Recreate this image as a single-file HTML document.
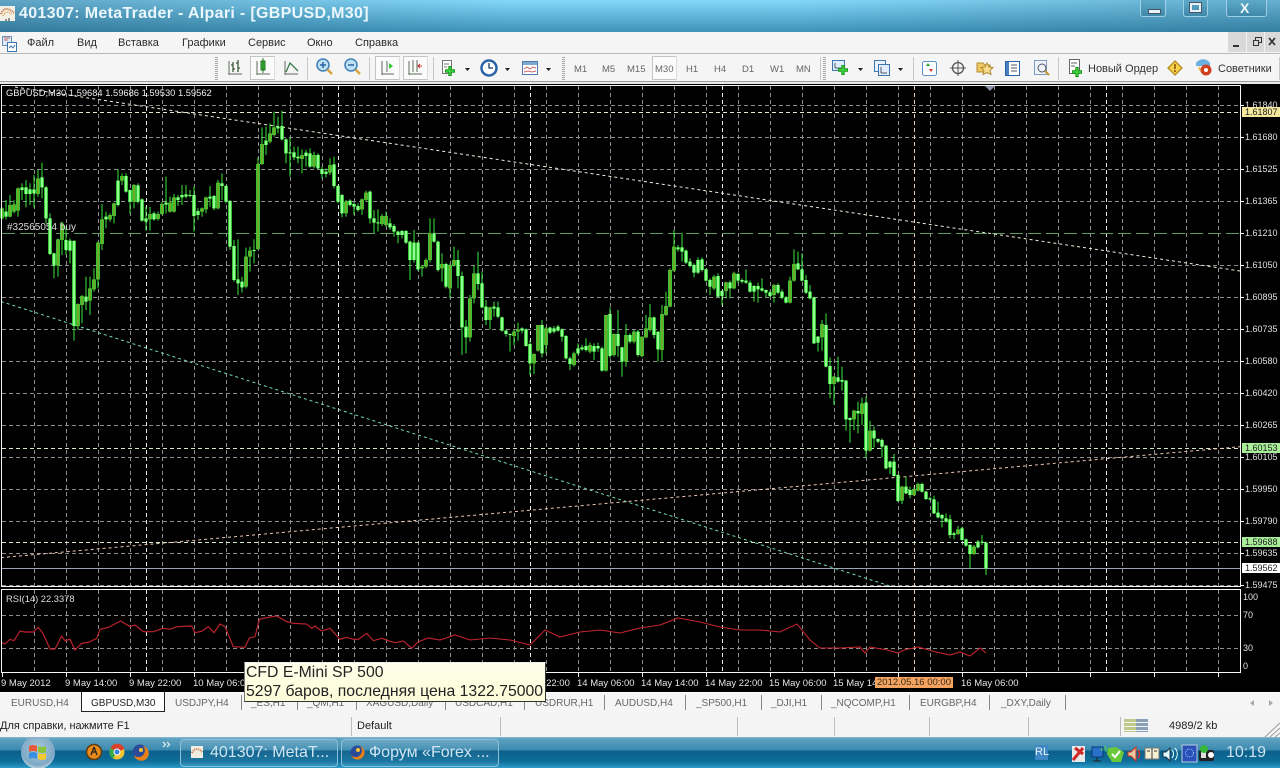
<!DOCTYPE html>
<html><head><meta charset="utf-8"><title>MetaTrader</title>
<style>
html,body{margin:0;padding:0;background:#000}
body{position:relative;width:1280px;height:768px;overflow:hidden;font-family:"Liberation Sans",sans-serif}
.t{position:absolute;white-space:nowrap;line-height:1}
.b{position:absolute}
.m{font-size:11px;color:#2a2a2a;top:38px}
.w{font-size:9.5px;color:#e4e4e4;top:679px}
.p{font-size:9px;color:#e0e0e0;left:1245px;margin-top:1px}
.h{position:absolute;left:1242px;width:38px;height:10px;font-size:9px;line-height:10px;color:#222;padding-left:3px;box-sizing:border-box}
.f{font-size:9.5px;color:#666;top:65px}
.n{font-size:10px;color:#666;top:699px}
.s{position:absolute;width:1px;top:695px;height:15px;background:#888}
.q{position:absolute;width:1px;top:717px;height:19px;background:#bdbdbd}
.r{position:absolute;width:1px;top:57px;height:23px;background:#c8c8c8}
.g{position:absolute;width:3px;top:57px;height:23px;background:repeating-linear-gradient(#aaa 0 1px,#f4f4f4 1px 2px)}
.pr{position:absolute;border:1px solid #c4c4c4;border-right-color:#ddd;background:#fbfbfb;box-sizing:border-box;top:56px;height:24px}
</style></head><body>

<svg class="b" style="left:0;top:0" width="1280" height="768" viewBox="0 0 1280 768">
<defs>
<path id="a1" d="M6 325V355M30 315V350M42 313V335M54 265V332M114 235V282M174 418V497M186 370V420M234 612V678M246 588V615M270 565V602M282 538V568M294 428V538M306 358V432M330 345V358M342 310V348M366 228V242M402 255V305M450 342V358M474 342V357M486 312V342M510 308V335M522 292V335M606 325V335M618 292V328M654 248V325M738 470V560M750 452V470M774 192V447M786 132V192M810 100V125M822 82V105M906 165V177M942 165V200M990 195V218"/>
<path id="a2" d="M18 335V350M66 262V270M78 262V282M90 268V282M102 268V280M126 232V262M138 262V355M150 355V462M162 460V497M198 420V450M210 422V452M222 423V678M258 590V605M318 350V358M354 242V315M378 228V275M390 270V305M414 256V305M426 298V362M438 355V365M462 340V358M498 308V314M534 292V300M546 285V292M558 283V290M570 285V288M582 285V348M594 333V345M630 290V296M642 288V325M666 250V258M678 258V305M690 303V440M702 438V540M714 538V550M726 545V562M762 450V453M798 122V135M834 80V85M846 78V118M858 118V160M870 157V160M882 157V172M894 170V175M918 158V168M930 160V200M954 165V205M966 207V222M978 215V222M1002 193V258M1014 258V305"/>
<path id="b1" d="M18 305V340M66 298V328M78 278V300M126 348V372M138 348V375M246 500V505M258 480V500M270 400V480M306 492V505M330 495V565M342 480V497M390 595V712M402 520V595M450 622V660M522 695V708M534 688V695M582 762V790M594 675V752M618 685V735M702 760V795M750 735V755M798 645V812M822 702V765M858 705V785M882 695V725M906 710V768M918 685V712M930 652V690"/>
<path id="b2" d="M6 285V340M30 302V315M42 312V320M54 318V330M90 275V355M102 355V368M114 367V370M150 370V382M162 378V395M174 395V405M186 393V405M198 393V428M210 425V480M222 428V480M234 428V508M282 400V425M294 425V510M318 492V560M354 480V528M366 528V682M378 680V712M414 520V552M426 550V622M438 620V660M462 620V626M474 622V650M486 652V692M498 692V702M510 702V705M546 685V692M558 688V738M570 732V790M606 675V760M630 683V698M642 685V695M654 680V692M666 688V710M678 708V775M690 775V792M714 745V760M726 742V748M738 738V750M762 738V755M774 738V745M786 745V812M810 642V768M834 702V738M846 742V785M870 705V725M894 695V765M942 652V705M954 695V748"/>
<path id="c1" d="M6 282V390M18 258V285M30 150V260M42 80V152M162 170V205M198 187V213M222 160V205M342 195V225M390 182V248M402 132V182M486 312V352M522 470V492M582 572V598M606 550V582M630 632V692"/>
<path id="c2" d="M54 82V88M66 82V95M78 92V128M90 125V138M102 135V158M114 120V158M126 118V150M138 148V182M150 180V200M174 168V230M186 213V228M210 187V205M234 162V182M246 180V185M258 182V188M270 188V215M282 198V215M294 198V208M306 205V212M318 210V218M330 217V228M354 195V218M366 215V233M378 232V248M414 130V148M426 148V182M438 180V218M450 215V235M462 232V370M474 350V368M498 315V440M510 438V492M534 472V485M546 480V485M558 482V598M570 594V600M594 573V580M618 548V692M642 632V655M654 657V665M666 660V680M678 677V745M690 725V742M702 725V768"/>
<path id="d1" d="M126 170V212M162 178V195M174 162V182M294 298V312M342 350V372"/>
<path id="d2" d="M114 135V213M138 170V190M150 180V195M186 162V185M198 185V207M210 205V208M222 208V250M234 248V262M246 255V265M258 265V275M270 268V315M282 310V315M306 295V330M318 328V347M330 345V372M354 335V352M366 335V338M378 338V415"/>
<radialGradient id="orb" cx=".5" cy=".35" r=".7"><stop offset="0" stop-color="#cfe4f0"/><stop offset=".7" stop-color="#6f9fc0"/><stop offset="1" stop-color="#e8f2f6"/></radialGradient>
</defs>
<rect x="0" y="84" width="1280" height="608" fill="#000"/>

<!-- grid -->
<g fill="none" stroke="#8e8e8e" stroke-width="1" stroke-dasharray="4 3" shape-rendering="crispEdges">
<path d="M2 105.500H1240M2 137.500H1240M2 169.500H1240M2 201.500H1240M2 265.500H1240M2 297.500H1240M2 329.500H1240M2 361.500H1240M2 393.500H1240M2 425.500H1240M2 457.500H1240M2 489.500H1240M2 521.500H1240M2 553.500H1240M2 585.500H1240"/>
<path d="M2 615.500H1240M2 648.500H1240"/>
<path d="M34.500 86V587M66.500 86V587M98.500 86V587M130.500 86V587M162.500 86V587M194.500 86V587M226.500 86V587M258.500 86V587M290.500 86V587M322.500 86V587M354.500 86V587M386.500 86V587M418.500 86V587M450.500 86V587M482.500 86V587M514.500 86V587M546.500 86V587M578.500 86V587M610.500 86V587M642.500 86V587M674.500 86V587M706.500 86V587M738.500 86V587M770.500 86V587M802.500 86V587M834.500 86V587M866.500 86V587M898.500 86V587M930.500 86V587M962.500 86V587M994.500 86V587M1026.500 86V587M1058.500 86V587M1090.500 86V587M1122.500 86V587M1154.500 86V587M1186.500 86V587M1218.500 86V587"/>
<path d="M34.500 590V673M66.500 590V673M98.500 590V673M130.500 590V673M162.500 590V673M194.500 590V673M226.500 590V673M258.500 590V673M290.500 590V673M322.500 590V673M354.500 590V673M386.500 590V673M418.500 590V673M450.500 590V673M482.500 590V673M514.500 590V673M546.500 590V673M578.500 590V673M610.500 590V673M642.500 590V673M674.500 590V673M706.500 590V673M738.500 590V673M770.500 590V673M802.500 590V673M834.500 590V673M866.500 590V673M898.500 590V673M930.500 590V673M962.500 590V673M994.500 590V673M1026.500 590V673M1058.500 590V673M1090.500 590V673M1122.500 590V673M1154.500 590V673M1186.500 590V673M1218.500 590V673"/>
</g>
<g fill="none" stroke="#e6e6e6" stroke-width="1" stroke-dasharray="4 3" shape-rendering="crispEdges">
<path d="M146.500 86V587M338.500 86V587M530.500 86V587M722.500 86V587M1106.500 86V587M146.500 590V673M338.500 590V673M530.500 590V673M722.500 590V673M1106.500 590V673"/>
<path d="M2 112.500H1240" stroke="#e6e6d0"/>
<path d="M914.500 86V587M914.500 590V673" stroke="#f0ceb4"/>
<path d="M2 448.500H1240M2 542.500H1240" stroke="#d0e8c8"/>
</g>
<path d="M2 233.500H1240" stroke="#5f9c5f" stroke-dasharray="13 5" shape-rendering="crispEdges"/>
<path d="M2 568.500H1240" stroke="#9aa4b4" shape-rendering="crispEdges"/>

<!-- trend lines -->
<g fill="none" stroke-width="1" stroke-dasharray="3 3">
<path d="M15 87L1240 271" stroke="#f2efdc"/>
<path d="M1 301.500L890 586" stroke="#74dcb0"/>
<path d="M1 557.600L1240 446.700" stroke="#eec8b4"/>
</g>

<!-- candles A -->
<g transform="translate(0 100) scale(.33333)" fill="none" stroke-width="3" stroke="#3ce83c">
<path d="M6 322V358M18 300V358M30 285V352M42 300V340M54 262V350M66 250V300M78 240V322M90 250V315M102 225V322M114 210V290M126 188V295M138 258V370M150 340V465M162 458V535M174 415V530M186 365V465M198 380V465M210 415V490M222 420V722M234 610V690M246 585V670M258 530V630M270 530V645M282 505V575M294 425V565M306 312V450M318 335V385M330 340V365M342 308V370M354 208V320M366 220V255M378 220V278M390 268V340M402 252V325M414 250V310M426 295V365M438 320V392M450 320V392M462 335V362M474 335V362M486 305V345M498 230V340M510 290V338M522 282V338M534 285V318M546 255V315M558 255V295M570 270V292M582 260V395M594 325V360M606 322V350M618 290V340M630 258V320M642 285V330M654 240V328M666 220V300M678 255V310M690 300V450M702 420V545M714 418V585M726 530V578M738 443V565M750 440V515M762 418V490M774 172V450M786 82V195M798 80V165M810 70V130M822 35V110M834 50V100M846 32V122M858 115V190M870 112V230M882 140V180M894 140V190M906 148V220M918 150V200M930 145V203M942 155V205M954 160V208M966 200V235M978 205V232M990 175V225M1002 170V265M1014 255V310"/>
<use href="#a1" stroke-width="11" stroke="#3ce83c"/><use href="#a1" stroke-width="5" stroke="#7a9e28"/>
<use href="#a2" stroke-width="11" stroke="#3ce83c"/><use href="#a2" stroke-width="5" stroke="#a4ffa4"/>
</g>
<!-- candles B -->
<g transform="translate(340 100) scale(.33333)" fill="none" stroke-width="3" stroke="#3ce83c">
<path d="M6 282V352M18 300V350M30 298V320M42 305V345M54 310V335M66 295V345M78 272V305M90 272V370M102 330V400M114 328V395M126 342V378M138 335V380M150 355V390M162 372V410M174 392V430M186 390V415M198 390V432M210 422V540M222 390V488M234 425V512M246 495V530M258 475V505M270 355V488M282 355V428M294 422V515M306 460V545M318 488V565M330 490V595M342 440V500M354 450V565M366 515V765M378 660V760M390 585V725M402 498V610M414 455V570M426 515V625M438 600V675M450 620V688M462 605V650M474 605V655M486 650V695M498 690V710M510 700V755M522 690V735M534 668V722M546 682V700M558 685V740M570 720V825M582 760V822M594 675V755M606 660V772M618 680V760M630 680V702M642 678V700M654 675V695M666 685V725M678 705V778M690 770V810M702 755V800M714 730V765M726 735V752M738 715V755M750 728V760M762 730V780M774 728V755M786 740V815M798 645V815M810 622V775M822 700V770M834 630V770M846 740V830M858 672V800M870 700V730M882 690V730M894 690V770M906 710V772M918 645V715M930 612V695M942 650V715M954 695V785"/>
<use href="#b1" stroke-width="11" stroke="#3ce83c"/><use href="#b1" stroke-width="5" stroke="#7a9e28"/>
<use href="#b2" stroke-width="11" stroke="#3ce83c"/><use href="#b2" stroke-width="5" stroke="#a4ffa4"/>
</g>
<!-- candles C -->
<g transform="translate(660 220) scale(.33333)" fill="none" stroke-width="3" stroke="#3ce83c">
<path d="M6 255V422M18 215V288M30 145V262M42 30V155M54 75V95M66 38V125M78 88V132M90 115V142M102 130V172M114 112V162M126 112V155M138 145V185M150 175V225M162 165V210M174 160V232M186 210V255M198 185V235M210 182V235M222 155V208M234 158V190M246 175V190M258 148V192M270 182V218M282 195V245M294 188V248M306 175V215M318 208V232M330 212V232M342 192V248M354 190V222M366 208V238M378 228V250M390 170V250M402 88V185M414 95V150M426 100V185M438 165V222M450 195V238M462 230V372M474 348V395M486 300V392M498 280V442M510 412V535M522 468V555M534 410V488M546 440V512M558 480V632M570 592V668M582 570V630M594 545V640M606 533V615M618 530V715M630 602V695M642 620V682M654 655V670M666 655V712M678 675V748M690 722V762M702 702V770"/>
<use href="#c1" stroke-width="11" stroke="#3ce83c"/><use href="#c1" stroke-width="5" stroke="#7a9e28"/>
<use href="#c2" stroke-width="11" stroke="#3ce83c"/><use href="#c2" stroke-width="5" stroke="#a4ffa4"/>
</g>
<!-- candles D -->
<g transform="translate(860 430) scale(.33333)" fill="none" stroke-width="3" stroke="#3ce83c">
<path d="M114 132V216M126 168V222M138 140V192M150 170V205M162 172V198M174 158V185M186 158V188M198 182V210M210 200V212M222 197V252M234 215V265M246 252V292M258 250V278M270 255V325M282 305V328M294 288V315M306 290V332M318 325V350M330 342V415M342 345V375M354 330V355M366 315V345M378 335V435"/>
<use href="#d1" stroke-width="11" stroke="#3ce83c"/><use href="#d1" stroke-width="5" stroke="#7a9e28"/>
<use href="#d2" stroke-width="11" stroke="#3ce83c"/><use href="#d2" stroke-width="5" stroke="#a4ffa4"/>
</g>

<!-- RSI -->
<g transform="translate(0 570) scale(.33333)" fill="none" stroke="#c2242e" stroke-width="3.400">
<path d="M5 218L15 222L30 208L42 212L60 183L75 186L100 186L115 172L130 192L150 237L165 237L185 198L195 212L210 208L225 240L245 220L265 217L290 205L300 178L325 172L362 153L390 170L405 165L430 185L460 185L490 175L510 178L530 170L575 168L585 188L605 184L625 170L642 188L660 162L675 170L700 230L735 232L748 204L765 200L778 148L800 143L830 138L860 155L880 160L920 162L935 175L945 168L965 183L990 175L1020 208L1040 202L1060 208L1075 208L1100 190L1120 212L1145 205L1165 212L1185 218L1210 213L1235 235L1255 215"/>
</g>
<path d="M418 642L428 638L440 640L455 635L470 640L490 638L510 640L530 645L545 630L560 637L580 632L600 630L620 633L640 628L660 625L678 618L700 622L720 627L740 630L760 630L780 632L797 624L810 640L820 648L840 648L860 647L865 653L870 647L887 650L898 653L904 650L918 647L932 651L950 655L960 652L970 656L980 648L986 653" fill="none" stroke="#c2242e" stroke-width="1.100"/>

<!-- frames -->
<g fill="none" stroke="#f6f6f6" stroke-width="1" shape-rendering="crispEdges">
<rect x="1.500" y="85.500" width="1239" height="501"/>
<rect x="1.500" y="589.500" width="1239" height="83"/>
<path d="M2.500 673V677M66.500 673V677M130.500 673V677M194.500 673V677M258.500 673V677M322.500 673V677M386.500 673V677M450.500 673V677M514.500 673V677M578.500 673V677M642.500 673V677M706.500 673V677M770.500 673V677M834.500 673V677M898.500 673V677M962.500 673V677M1026.500 673V677M1090.500 673V677M1154.500 673V677M1218.500 673V677"/>
<path d="M1240 105.500H1244M1240 137.500H1244M1240 169.500H1244M1240 201.500H1244M1240 233.500H1244M1240 265.500H1244M1240 297.500H1244M1240 329.500H1244M1240 361.500H1244M1240 393.500H1244M1240 425.500H1244M1240 457.500H1244M1240 489.500H1244M1240 521.500H1244M1240 553.500H1244M1240 585.500H1244"/>
</g>
<path d="M985 86H995L990 91Z" fill="#8a93a8"/>
</svg>

<!-- chart text -->
<span class="t" style="left:6px;top:89px;font-size:9.360px;color:#eee">GBPUSD,M30 1.59684 1.59686 1.59530 1.59562</span>
<span class="t" style="left:7px;top:223px;font-size:10px;color:#ddd">#32565054 buy</span>
<span class="t" style="left:6px;top:595px;font-size:9.360px;color:#ddd">RSI(14) 22.3378</span>

<span class="t p" style="top:100px">1.61840</span>
<span class="t p" style="top:132px">1.61680</span>
<span class="t p" style="top:164px">1.61525</span>
<span class="t p" style="top:196px">1.61365</span>
<span class="t p" style="top:228px">1.61210</span>
<span class="t p" style="top:260px">1.61050</span>
<span class="t p" style="top:292px">1.60895</span>
<span class="t p" style="top:324px">1.60735</span>
<span class="t p" style="top:356px">1.60580</span>
<span class="t p" style="top:388px">1.60420</span>
<span class="t p" style="top:420px">1.60265</span>
<span class="t p" style="top:452px">1.60105</span>
<span class="t p" style="top:484px">1.59950</span>
<span class="t p" style="top:516px">1.59790</span>
<span class="t p" style="top:548px">1.59635</span>
<span class="t p" style="top:580px">1.59475</span>
<div class="h" style="top:107px;background:#f4e89c">1.61807</div>
<div class="h" style="top:443px;background:#a8ee98">1.60153</div>
<div class="h" style="top:537px;background:#a8ee98">1.59688</div>
<div class="h" style="top:563px;background:#fff">1.59562</div>
<span class="t p" style="left:1243px;top:593px;margin:0">100</span>
<span class="t p" style="left:1243px;top:611px;margin:0">70</span>
<span class="t p" style="left:1243px;top:644px;margin:0">30</span>
<span class="t p" style="left:1243px;top:662px;margin:0">0</span>

<span class="t w" style="left:1px">9 May 2012</span>
<span class="t w" style="left:65px">9 May 14:00</span>
<span class="t w" style="left:129px">9 May 22:00</span>
<span class="t w" style="left:193px">10 May 06:00</span>
<span class="t w" style="left:257px">10 May 14:00</span>
<span class="t w" style="left:321px">10 May 22:00</span>
<span class="t w" style="left:385px">11 May 06:00</span>
<span class="t w" style="left:449px">11 May 14:00</span>
<span class="t w" style="left:513px">11 May 22:00</span>
<span class="t w" style="left:577px">14 May 06:00</span>
<span class="t w" style="left:641px">14 May 14:00</span>
<span class="t w" style="left:705px">14 May 22:00</span>
<span class="t w" style="left:769px">15 May 06:00</span>
<span class="t w" style="left:833px">15 May 14:00</span>
<span class="t w" style="left:961px">16 May 06:00</span>
<span class="t" style="left:875px;top:677px;width:78px;height:11px;background:#f4a460;color:#3a2a18;font-size:9.500px;line-height:11px;text-align:center">2012.05.16 00:00</span>

<!-- title bar -->
<div class="b" style="left:0;top:0;width:1280px;height:32px;background:linear-gradient(90deg,rgba(35,80,110,.38),rgba(0,0,0,0) 40%,rgba(0,0,0,0) 62%,rgba(25,70,100,.28)),linear-gradient(#84d8fa,#3d93b8)"></div>
<svg class="b" style="left:0;top:5px" width="16" height="18" viewBox="0 0 16 18"><rect x="0" y="1" width="15" height="15" fill="#f4efe4"/><path d="M1 9C3 3 8 2 14 8" fill="none" stroke="#c56a3a" stroke-width="2" stroke-dasharray="1 1"/><path d="M3 11C5 6 9 6 12 10" fill="none" stroke="#d9a54a" stroke-width="1.500" stroke-dasharray="1 1"/><path d="M5 15h2M9 13v3" stroke="#333"/></svg>
<span class="t" style="left:19px;top:6px;font-size:16px;font-weight:bold;color:#eaf7fc;letter-spacing:.32px">401307: MetaTrader - Alpari - [GBPUSD,M30]</span>
<div class="b" style="left:1140px;top:0;width:26px;height:17px;background:linear-gradient(#5fa9c8,#3f88aa);border:1px solid #9fd0e4;border-top:0;box-sizing:border-box;border-radius:0 0 3px 3px"><div class="b" style="left:7px;top:9px;width:11px;height:3px;background:#e8f2f6;border:1px solid #456"></div></div>
<div class="b" style="left:1183px;top:0;width:25px;height:17px;background:linear-gradient(#5fa9c8,#3f88aa);border:1px solid #9fd0e4;border-top:0;box-sizing:border-box;border-radius:0 0 3px 3px"><div class="b" style="left:6px;top:3px;width:11px;height:9px;border:2px solid #e8f2f6;box-sizing:border-box;outline:1px solid #456"></div></div>
<div class="b" style="left:1226px;top:0;width:41px;height:17px;background:linear-gradient(#5fa9c8,#3f88aa);border:1px solid #9fd0e4;border-top:0;box-sizing:border-box;border-radius:0 0 3px 3px"></div>
<span class="t" style="left:1240px;top:1px;font-size:14px;font-weight:bold;color:#eef6f9">X</span>

<!-- menu -->
<div class="b" style="left:0;top:32px;width:1280px;height:22px;background:#f5f5f5;border-bottom:1px solid #b8b8b8;box-sizing:border-box"></div>
<svg class="b" style="left:2px;top:36px" width="15" height="16" viewBox="0 0 15 16"><rect x=".5" y=".5" width="9" height="9" fill="#dfeaf6" stroke="#6a8fb8"/><rect x="5.500" y="6.500" width="9" height="9" fill="#fff" stroke="#3f76ad"/><path d="M7 12l2-2 2 2 2-3" fill="none" stroke="#3f76ad"/><path d="M2 2h6M2 4h4" stroke="#b66"/></svg>
<span class="t m" style="left:27px">Файл</span>
<span class="t m" style="left:77px">Вид</span>
<span class="t m" style="left:118px">Вставка</span>
<span class="t m" style="left:182px">Графики</span>
<span class="t m" style="left:248px">Сервис</span>
<span class="t m" style="left:307px">Окно</span>
<span class="t m" style="left:355px">Справка</span>
<div class="b" style="left:1228px;top:32px;width:52px;height:20px;background:#d9d9d9"></div>
<svg class="b" style="left:1228px;top:32px" width="52" height="20" viewBox="0 0 52 20" fill="none" stroke="#333"><path d="M5 14h6" stroke-width="2"/><rect x="25.500" y="8.500" width="5" height="5"/><path d="M27.500 8V5.500h6v5H31" /><path d="M41 6l6 7M47 6l-6 7" stroke-width="1.700"/><path d="M18.500 0V20M36.500 0V20" stroke="#f2f2f2"/></svg>

<!-- toolbar -->
<div class="b" style="left:0;top:54px;width:1280px;height:28px;background:#f5f5f5;border-bottom:1px solid #9c9c9c;box-sizing:border-box"></div>
<div class="b" style="left:0;top:82px;width:1280px;height:2px;background:#e8e8e8"></div>
<div class="g" style="left:215px"></div>
<div class="pr" style="left:250px;width:25px"></div>
<div class="pr" style="left:375px;width:25px"></div>
<div class="pr" style="left:403px;width:25px"></div>
<div class="pr" style="left:652px;width:25px"></div>
<div class="r" style="left:307px"></div><div class="r" style="left:369px"></div><div class="r" style="left:433px"></div>
<div class="g" style="left:562px"></div><div class="r" style="left:820px"></div><div class="g" style="left:823px"></div>
<div class="r" style="left:913px"></div><div class="r" style="left:1058px"></div><div class="r" style="left:1279px"></div>

<svg class="b" style="left:0;top:54px" width="1280" height="28" viewBox="0 0 1280 28" fill="none">
<path d="M229 20H242M229 21V7" stroke="#5a6a5a"/><path d="M233 8V18M231 11h2M233 15h2M238 6V18M236 9h2M238 14h2" stroke="#3a5a3a" stroke-width="1.300"/>
<path d="M257 20H270M257 21V7" stroke="#5a6a5a"/><rect x="261" y="7" width="4" height="9" fill="#35c835" stroke="#246e24"/><path d="M263 4V19" stroke="#246e24"/>
<path d="M285 20H298M285 21V7" stroke="#5a6a5a"/><path d="M286 18L290 9L294 13L298 17" stroke="#3a7a4a" stroke-width="1.300"/>
<circle cx="323" cy="11" r="6" fill="#bfe0f5" stroke="#3f7fb5" stroke-width="1.500"/><path d="M320 11h6M323 8v6" stroke="#2a62a0" stroke-width="1.500"/><path d="M327.500 15.500L332 20" stroke="#d9a23c" stroke-width="2.500"/>
<circle cx="351" cy="11" r="6" fill="#bfe0f5" stroke="#3f7fb5" stroke-width="1.500"/><path d="M348 11h6" stroke="#2a62a0" stroke-width="1.500"/><path d="M355.500 15.500L360 20" stroke="#d9a23c" stroke-width="2.500"/>
<path d="M382 20H394M382 21V7M387 7V18" stroke="#5a6a5a"/><path d="M389 9l4 3-4 3z" fill="#35c835"/>
<path d="M409 20H422M409 21V7M413 6V18M417 6V18" stroke="#5a6a5a"/><path d="M418 12h4M420 10l-2 2 2 2" stroke="#d03030"/>
<rect x="442.500" y="6.500" width="9" height="13" fill="#fff" stroke="#777"/><path d="M444 10h5M444 13h3" stroke="#777"/><path d="M450 12v10M445 17h10" stroke="#1a9a1a" stroke-width="3.400"/><path d="M450 13v8M446 17h8" stroke="#48e048" stroke-width="1.200"/>
<path d="M465 14h5l-2.500 3z" fill="#222"/>
<circle cx="489" cy="14" r="7.500" fill="#fff" stroke="#2a62a8" stroke-width="2.500"/><path d="M489 9v5h4" stroke="#1a3a6a" stroke-width="1.300"/>
<path d="M505 14h5l-2.500 3z" fill="#222"/>
<rect x="522.500" y="7.500" width="15" height="13" fill="#fff" stroke="#4a7ab0"/><rect x="523" y="8" width="14" height="3" fill="#7fa8d0"/><path d="M524 15l3-2 3 2 3-2 3 1M524 18l4-1 4 1 4-1" stroke="#c66"/><path d="M546 14h5l-2.500 3z" fill="#222"/>
<rect x="832.500" y="6.500" width="12" height="10" fill="#dfeefa" stroke="#3f76ad"/><path d="M835 9v5M835 14h6" stroke="#4a5a6a"/><path d="M843 11v10M838 16h10" stroke="#1a9a1a" stroke-width="3.400"/><path d="M843 12v8M839 16h8" stroke="#48e048" stroke-width="1.200"/>
<path d="M858 14h5l-2.500 3z" fill="#222"/>
<rect x="874.500" y="6.500" width="11" height="11" fill="#eaf3fb" stroke="#3f76ad"/><rect x="878.500" y="10.500" width="11" height="11" fill="#dfeefa" stroke="#3f76ad"/><path d="M881 13v6M881 19h6" stroke="#556"/>
<path d="M898 14h5l-2.500 3z" fill="#222"/>
<rect x="922.500" y="7.500" width="14" height="14" rx="2" fill="#fff" stroke="#5b90c0"/><path d="M926 12l2-3 2 3z" fill="#2aa02a"/><path d="M929 15l2 3 2-3z" fill="#d03030"/>
<circle cx="958" cy="14" r="5.500" stroke="#555" stroke-width="1.300"/><path d="M958 6v16M950 14h16" stroke="#555"/>
<path d="M977 9h6l2 2h5v7h-13z" fill="#f0c860" stroke="#b08a30"/><path d="M987 9l2 4 4 .500-3 3 1 4-4-2-4 2 1-4-3-3 4-.500z" fill="#f8e090" stroke="#b08a30"/>
<rect x="1005.500" y="7.500" width="14" height="14" fill="#fff" stroke="#2a62a8"/><rect x="1006" y="8" width="3" height="13" fill="#4a80c0"/><path d="M1011 11h6M1011 14h6M1011 17h6" stroke="#556"/>
<rect x="1034.500" y="6.500" width="12" height="14" fill="#eef4fa" stroke="#7a9ac0"/><circle cx="1042" cy="14" r="4" stroke="#556"/><path d="M1045 17l4 4" stroke="#c8962c" stroke-width="2"/>
<rect x="1069.500" y="5.500" width="10" height="14" fill="#fff" stroke="#666"/><path d="M1071 9h6M1071 12h4" stroke="#666"/><path d="M1077 13v10M1072 18h10" stroke="#1a9a1a" stroke-width="3.400"/><path d="M1077 14v8M1073 18h8" stroke="#48e048" stroke-width="1.200"/>
<path d="M1175 7l7 7-7 7-7-7z" fill="#f6d24a" stroke="#b88a20" stroke-width="1.300"/><path d="M1175 10v5M1175 16v2" stroke="#8a4a10" stroke-width="1.500"/>
<path d="M1196 9c3-5 11-5 14 0v3h-14z" fill="#6ab0e0"/><path d="M1199 12l5 7-1 1-5-5z" fill="#f2c260"/><circle cx="1206" cy="16" r="5.500" fill="#d04020"/><circle cx="1206" cy="16" r="2" fill="#fff"/>
</svg>

<span class="t f" style="left:574px">M1</span>
<span class="t f" style="left:602px">M5</span>
<span class="t f" style="left:627px">M15</span>
<span class="t f" style="left:655px">M30</span>
<span class="t f" style="left:686px">H1</span>
<span class="t f" style="left:714px">H4</span>
<span class="t f" style="left:742px">D1</span>
<span class="t f" style="left:770px">W1</span>
<span class="t f" style="left:796px">MN</span>
<span class="t" style="left:1088px;top:64px;font-size:11px;color:#333">Новый Ордер</span>
<span class="t" style="left:1218px;top:64px;font-size:11px;color:#333">Советники</span>

<!-- tabs -->
<div class="b" style="left:0;top:692px;width:1280px;height:21px;background:#f5f5f5;border-top:1px solid #fff;box-sizing:border-box"></div>
<span class="t n" style="left:11px">EURUSD,H4</span>
<div class="b" style="left:81px;top:692px;width:84px;height:20px;background:#fff;border:1px solid #222;border-top:0;box-sizing:border-box"></div>
<span class="t n" style="left:91px;color:#222">GBPUSD,M30</span>
<span class="t n" style="left:175px">USDJPY,H4</span><div class="s" style="left:241px"></div>
<span class="t n" style="left:251px">_ES,H1</span><div class="s" style="left:297px"></div>
<span class="t n" style="left:307px">_QM,H1</span><div class="s" style="left:356px"></div>
<span class="t n" style="left:366px">XAGUSD,Daily</span><div class="s" style="left:445px"></div>
<span class="t n" style="left:455px">USDCAD,H1</span><div class="s" style="left:524px"></div>
<span class="t n" style="left:535px">USDRUR,H1</span><div class="s" style="left:604px"></div>
<span class="t n" style="left:615px">AUDUSD,H4</span><div class="s" style="left:685px"></div>
<span class="t n" style="left:696px">_SP500,H1</span><div class="s" style="left:761px"></div>
<span class="t n" style="left:771px">_DJI,H1</span><div class="s" style="left:821px"></div>
<span class="t n" style="left:831px">_NQCOMP,H1</span><div class="s" style="left:909px"></div>
<span class="t n" style="left:920px">EURGBP,H4</span><div class="s" style="left:989px"></div>
<span class="t n" style="left:1001px">_DXY,Daily</span><div class="s" style="left:1065px"></div>
<svg class="b" style="left:1248px;top:698px" width="28" height="10" viewBox="0 0 28 10"><path d="M6 2L2 5l4 3zM21 2l4 3-4 3z" fill="#aaa"/></svg>

<!-- status -->
<div class="b" style="left:0;top:713px;width:1280px;height:24px;background:#f4f4f4"></div>
<span class="t" style="left:0;top:721px;font-size:11px;color:#222">Для справки, нажмите F1</span>
<div class="q" style="left:351px"></div><span class="t" style="left:357px;top:721px;font-size:11px;color:#222">Default</span>
<div class="q" style="left:500px"></div><div class="q" style="left:737px"></div><div class="q" style="left:834px"></div><div class="q" style="left:929px"></div><div class="q" style="left:1028px"></div><div class="q" style="left:1120px"></div>
<svg class="b" style="left:1124px;top:719px" width="25" height="13" viewBox="0 0 25 13"><path d="M1 0v13M3 0v13M5 0v13M7 0v13M9 0v13M11 0v13" stroke="#8aa020" stroke-dasharray="3 1"/><path d="M13 0v13M15 0v13M17 0v13M19 0v13M21 0v13M23 0v13" stroke="#1a4a7a" stroke-dasharray="3 1"/></svg>
<span class="t" style="left:1169px;top:721px;font-size:11px;color:#222">4989/2 kb</span>
<svg class="b" style="left:1264px;top:722px" width="16" height="15" viewBox="0 0 16 15"><path d="M1 15L16 1M6 15L16 6M11 15L16 11" stroke="#999"/></svg>

<!-- taskbar -->
<div class="b" style="left:0;top:737px;width:1280px;height:31px;background:linear-gradient(#8abdd2 0,#5da0bf 6%,#3a8ab0 42%,#0c5f8a 45%,#0e6d9a 78%,#2c9bc8 100%)"></div>
<svg class="b" style="left:0;top:737px" width="260" height="31" viewBox="0 0 260 31">
<defs><radialGradient id="orb2" cx=".5" cy=".4" r=".65"><stop offset="0" stop-color="#a9c8dc"/><stop offset=".75" stop-color="#7da8c4"/><stop offset="1" stop-color="#e4eef3"/></radialGradient></defs>
<circle cx="38" cy="15" r="17" fill="url(#orb2)"/>
<path d="M29 9q4-2 8 0v6q-4-2-8 0z" fill="#e8583a"/><path d="M38 9q4 2 8 0v6q-4 2-8 0z" fill="#8ac43a"/><path d="M29 16q4-2 8 0v6q-4-2-8 0z" fill="#3a90e0"/><path d="M38 16q4 2 8 0v6q-4 2-8 0z" fill="#f4c830"/>
<circle cx="94" cy="15" r="7.500" fill="#e88a1a" stroke="#5a3a10" stroke-width="1.500"/><path d="M94 10l-3 8M94 10l3 8M92 15h4" stroke="#222" stroke-width="1.300"/>
<circle cx="117" cy="15" r="7.500" fill="#f4c430"/><path d="M117 15L110.500 11A7.500 7.500 0 0 1 124.500 12Z" fill="#d8402c"/><path d="M117 15L113 21.500A7.500 7.500 0 0 1 110.500 11Z" fill="#3aa845"/><circle cx="117" cy="15" r="3" fill="#3a80d8" stroke="#fff"/>
<circle cx="140" cy="15" r="7.500" fill="#2a4a9a"/><path d="M134 18A7.500 7.500 0 1 0 143 9C147 13 144 20 139 20C136 20 135 19 134 18Z" fill="#e8801a"/><circle cx="141" cy="13" r="2" fill="#f4c430"/>
<path d="M163 5l2.500 2.500-2.500 2.500M167 5l2.500 2.500-2.500 2.500" stroke="#e8f2f6" fill="none" stroke-width="1.200"/>
<rect x="191" y="9" width="12" height="12" fill="#f0ece0"/><path d="M192 16C194 11 199 11 202 15" fill="none" stroke="#c56a3a" stroke-width="2" stroke-dasharray="1 1"/>
</svg>
<div class="b" style="left:180px;top:739px;width:158px;height:28px;border:1px solid #8cc0d8;border-radius:4px;box-sizing:border-box;background:linear-gradient(rgba(255,255,255,.12),rgba(255,255,255,.04) 45%,rgba(255,255,255,.08))"></div>
<div class="b" style="left:341px;top:739px;width:158px;height:28px;border:1px solid #8cc0d8;border-radius:4px;box-sizing:border-box;background:linear-gradient(rgba(255,255,255,.12),rgba(255,255,255,.04) 45%,rgba(255,255,255,.08))"></div>
<svg class="b" style="left:350px;top:745px" width="15" height="15" viewBox="0 0 15 15"><circle cx="7.500" cy="7.500" r="7" fill="#2a4a9a"/><path d="M1 10A7 7 0 1 0 10 1C14 5 11 12 6 12C3 12 2 11 1 10Z" fill="#e8801a"/><circle cx="8" cy="5" r="2" fill="#f4c430"/></svg>
<span class="t" style="left:210px;top:745px;font-size:16px;color:#cfe6f2">401307: MetaT...</span>
<span class="t" style="left:369px;top:745px;font-size:16px;color:#cfe6f2">Форум «Forex ...</span>
<div class="b" style="left:1035px;top:745px;width:13px;height:15px;background:#3f86c4"></div>
<span class="t" style="left:1035px;top:747px;font-size:11px;color:#e8f2f8">RL</span>
<svg class="b" style="left:1070px;top:742px" width="150" height="24" viewBox="0 0 150 24">
<rect x="2" y="4" width="13" height="16" fill="#e8e8e8"/><path d="M3 18L13 6M5 6l8 6" stroke="#d02828" stroke-width="3" fill="none"/>
<rect x="22" y="5" width="11" height="10" fill="#2a70c8" stroke="#0a3a7a"/><path d="M27 15v4M23 19h8" stroke="#222"/><path d="M34 4a6 6 0 0 1 2 6M31 6a4 4 0 0 1 1 3" stroke="#50e050" fill="none"/>
<path d="M38 6l8-1 8 5-3 10-9 0-5-8z" fill="#6ac83a"/><path d="M42 12l3 3 5-6" stroke="#fff" stroke-width="2" fill="none"/>
<path d="M58 10h3l5-5v14l-5-5h-3z" fill="#e8c8a0" stroke="#d83020"/><path d="M68 8a6 6 0 0 1 0 8" stroke="#d83020" fill="none" stroke-width="1.500"/>
<rect x="75" y="6" width="14" height="11" fill="#f4f0d0" stroke="#777"/><path d="M82 6v11M77 9h3M84 9h3" stroke="#334"/>
<path d="M93 10h3l4-4v13l-4-4h-3z" fill="#dff" stroke="#234"/><path d="M102 8a6 6 0 0 1 0 8M105 6a9 9 0 0 1 0 12" stroke="#dff" fill="none"/>
<rect x="112" y="3" width="15" height="17" fill="#2a50b8" stroke="#bcd"/><circle cx="119.500" cy="11" r="4" fill="none" stroke="#9cf" stroke-dasharray="1 1"/>
<rect x="129" y="8" width="15" height="11" rx="2" fill="#222"/><rect x="131" y="10" width="5" height="6" fill="#ddd"/><circle cx="141" cy="13" r="3" fill="#fff"/><circle cx="134" cy="7" r="4" fill="#38b838"/>
</svg>
<span class="t" style="left:1226px;top:745px;font-size:16px;color:#cfe3ee">10:19</span>

<!-- tooltip -->
<div class="b" style="left:244px;top:662px;width:302px;height:40px;background:linear-gradient(#ffffea,#fdfcd8);border:1px solid #333;border-top-color:#eee;border-left-color:#777;box-sizing:border-box"></div>
<span class="t" style="left:246px;top:665px;font-size:15.800px;color:#222">CFD E-Mini SP 500</span>
<span class="t" style="left:246px;top:684px;font-size:15.800px;color:#222">5297 баров, последняя цена 1322.75000</span>
</body></html>
